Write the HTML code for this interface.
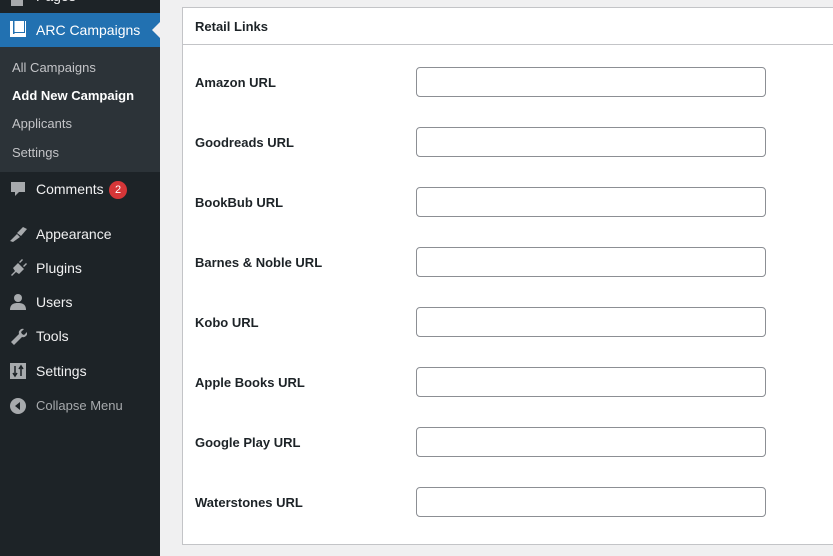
<!DOCTYPE html>
<html><head><style>
body{margin:0;width:833px;height:556px;overflow:hidden;background:#f0f0f1;font-family:"Liberation Sans",sans-serif;position:relative}
#side{position:absolute;left:0;top:0;width:160px;height:556px;background:#1d2327}
.it{position:absolute;left:36px;color:#f0f0f1;font-size:14px}
.ic{position:absolute;left:9px;width:18px;height:18px;color:#a7aaad}
#sub{position:absolute;top:47px;left:0;width:160px;height:125px;background:#2c3338}
.s{position:absolute;left:12px;font-size:13px;color:#c3c4c7}
#panel{position:absolute;left:182px;top:7px;width:660px;height:536px;background:#fff;border:1px solid #c3c4c7}
.lab{position:absolute;left:12px;font-size:13px;color:#1d2327;font-weight:bold}
.inp{position:absolute;left:233px;width:348px;height:28px;border:1px solid #8c8f94;border-radius:4px;background:#fff}
</style></head><body>
<div id="side">
<div class="ic" style="top:-10px"><svg width="18" height="18"><rect x="2" y="2" width="12" height="14" fill="#a7aaad"/></svg></div>
<div class="it" style="top:-12px;color:#f0f0f1">Pages</div>
<div style="position:absolute;top:13px;left:0;width:160px;height:34px;background:#2271b1"></div>
<svg style="position:absolute;left:9px;top:20px" width="18" height="18"><rect x="1" y="1" width="16" height="16" fill="#fff"/><rect x="5" y="1" width="11" height="12" fill="#2271b1"/><rect x="5" y="1" width="10" height="11" fill="#fff"/><rect x="4" y="1" width="1.5" height="13" fill="#2271b1"/></svg>
<div class="it" style="top:22px;color:#fff">ARC Campaigns</div>
<div style="position:absolute;left:152px;top:22px;width:0;height:0;border-top:8px solid transparent;border-bottom:8px solid transparent;border-right:8px solid #f0f0f1"></div>
<div id="sub"></div>
<div class="s" style="top:60px">All Campaigns</div>
<div class="s" style="top:88px;color:#fff;font-weight:bold">Add New Campaign</div>
<div class="s" style="top:116px">Applicants</div>
<div class="s" style="top:145px">Settings</div>
<svg style="position:absolute;left:10px;top:181px" width="16" height="16"><path d="M1 1h14v10h-6l-4 4v-4H1z" fill="#a7aaad"/></svg>
<div class="it" style="top:181px">Comments</div>
<div style="position:absolute;left:109px;top:181px;width:18px;height:18px;border-radius:9px;background:#d63638;color:#fff;font-size:11px;text-align:center;line-height:18px">2</div>
<svg style="position:absolute;left:8px;top:225px" width="20" height="18"><path d="M2 16l7-7 3 3-7 5zM9 8l6-6 4 2-6 7z" fill="#a7aaad"/></svg>
<div class="it" style="top:226px">Appearance</div>
<svg style="position:absolute;left:9px;top:259px" width="18" height="18"><path d="M2 16l4-4 -2-3 5-5 6 6-5 5-3-2-4 4zM10 3l3-3 1 1-3 3zM14 7l3-3 1 1-3 3z" fill="#a7aaad"/></svg>
<div class="it" style="top:260px">Plugins</div>
<svg style="position:absolute;left:9px;top:293px" width="18" height="18"><circle cx="9" cy="5" r="4" fill="#a7aaad"/><path d="M1 17c0-6 4-7 8-7s8 1 8 7z" fill="#a7aaad"/></svg>
<div class="it" style="top:294px">Users</div>
<svg style="position:absolute;left:9px;top:327px" width="18" height="18"><path d="M2 15l8-8a4 4 0 0 1 5-5l-3 3 1 2 2 1 3-3a4 4 0 0 1-5 5l-8 8z" fill="#a7aaad"/></svg>
<div class="it" style="top:328px">Tools</div>
<svg style="position:absolute;left:10px;top:363px" width="16" height="16"><rect width="16" height="16" fill="#a7aaad"/><path d="M5 3v10M3 10l2 3 2-3M11 13V3M9 6l2-3 2 3" stroke="#1d2327" stroke-width="1.5" fill="none"/></svg>
<div class="it" style="top:363px">Settings</div>
<svg style="position:absolute;left:9px;top:397px" width="18" height="18"><circle cx="9" cy="9" r="8" fill="#a7aaad"/><path d="M11 5v8l-5-4z" fill="#1d2327"/></svg>
<div class="it" style="top:398px;color:#a7aaad;font-size:13px">Collapse Menu</div>
</div>
<div id="panel">
<div style="position:absolute;left:0;top:0;right:0;height:36px;border-bottom:1px solid #c3c4c7"></div>
<div class="lab" style="top:11px;font-size:13px">Retail Links</div>
<div class="lab" style="top:67px">Amazon URL</div><div class="inp" style="top:59px"></div>
<div class="lab" style="top:127px">Goodreads URL</div><div class="inp" style="top:119px"></div>
<div class="lab" style="top:187px">BookBub URL</div><div class="inp" style="top:179px"></div>
<div class="lab" style="top:247px">Barnes &amp; Noble URL</div><div class="inp" style="top:239px"></div>
<div class="lab" style="top:307px">Kobo URL</div><div class="inp" style="top:299px"></div>
<div class="lab" style="top:367px">Apple Books URL</div><div class="inp" style="top:359px"></div>
<div class="lab" style="top:427px">Google Play URL</div><div class="inp" style="top:419px"></div>
<div class="lab" style="top:487px">Waterstones URL</div><div class="inp" style="top:479px"></div>
</div>
</body></html>
